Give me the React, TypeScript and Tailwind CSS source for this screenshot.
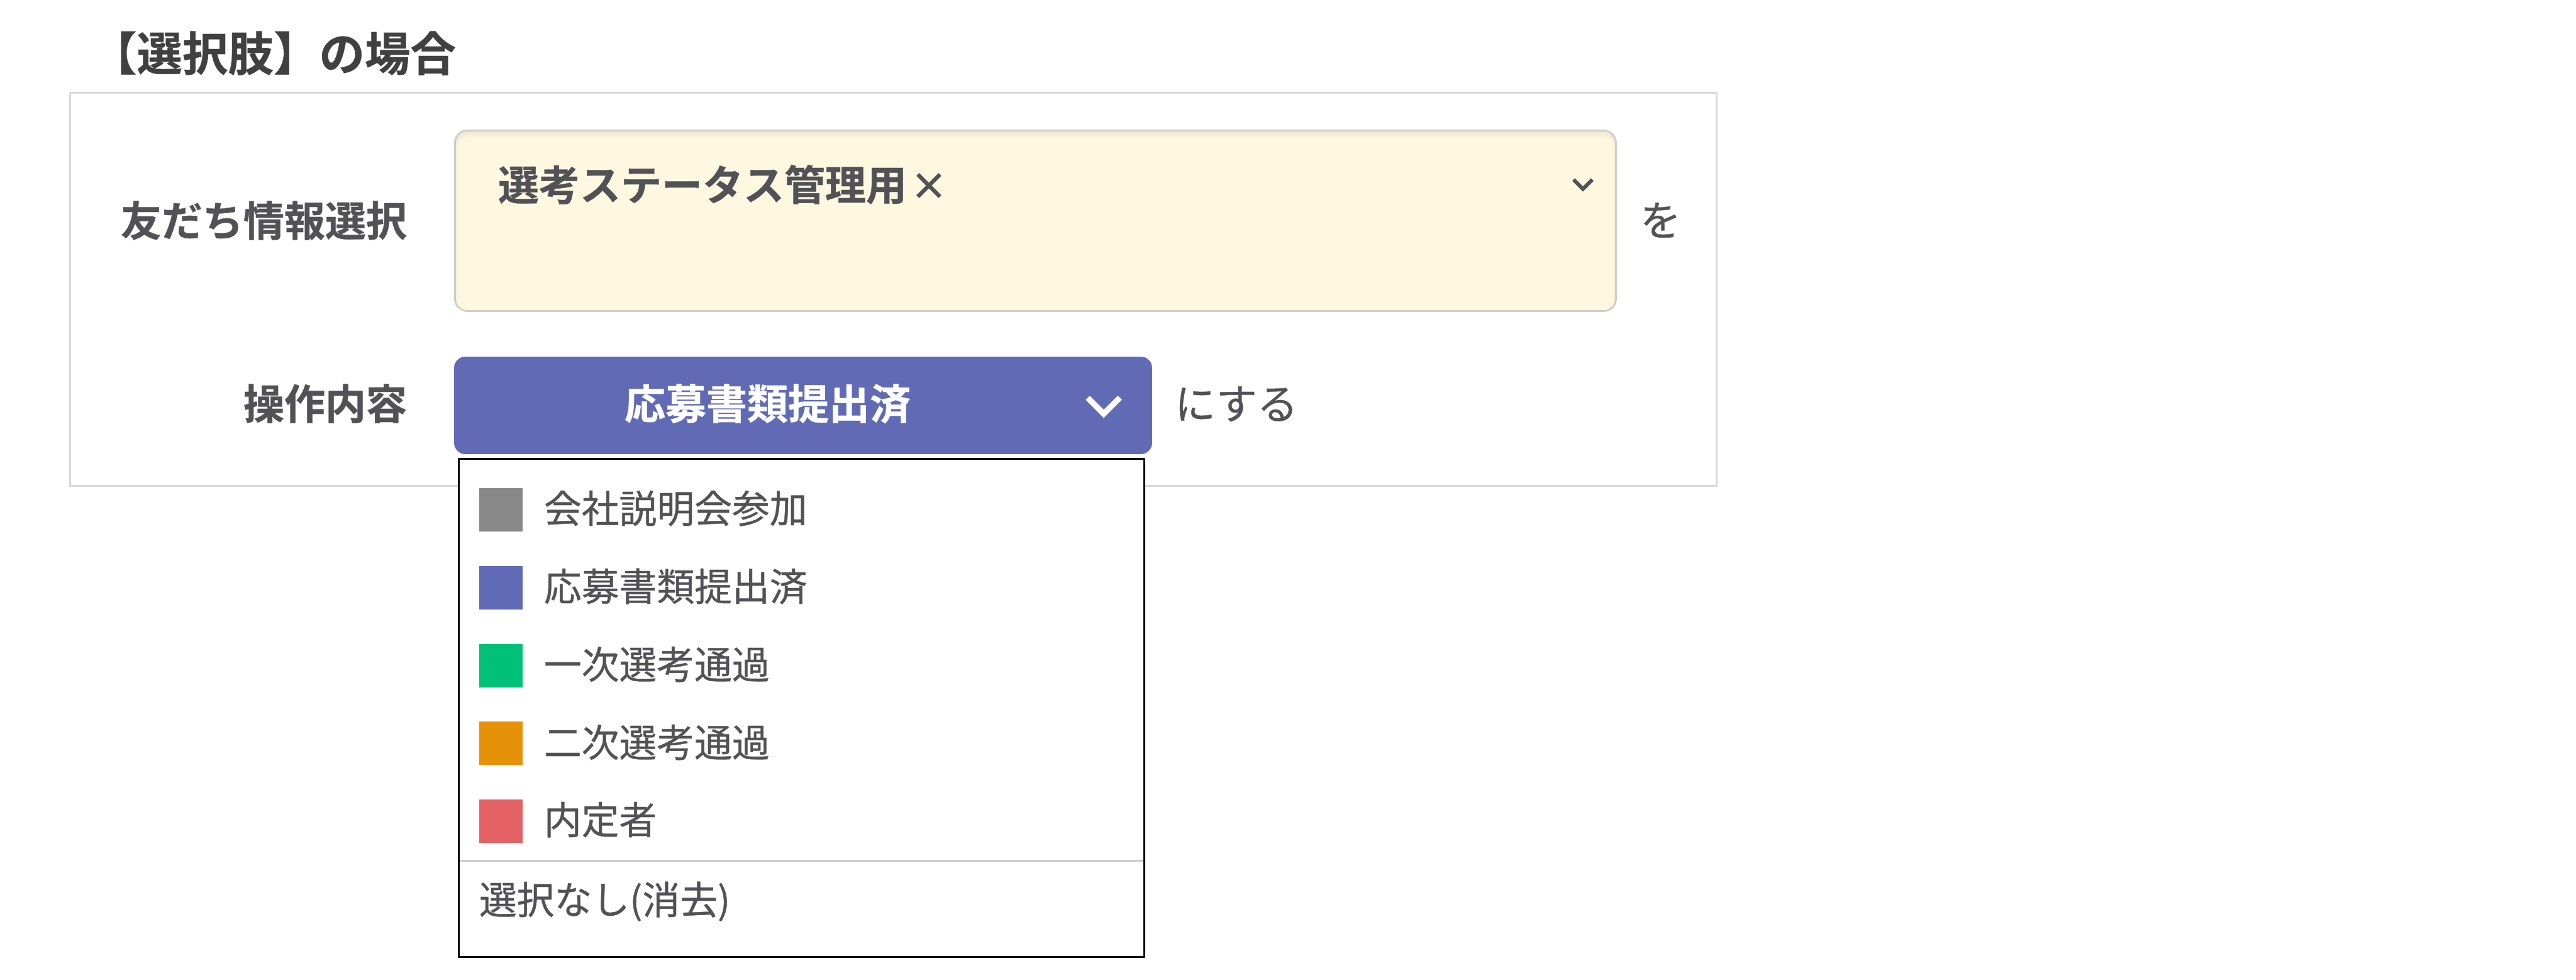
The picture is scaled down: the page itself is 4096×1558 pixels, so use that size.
const options = [
  { label: "会社説明会参加", swatch: "bg-[#888888]" },
  { label: "応募書類提出済", swatch: "bg-[#616ab5]" },
  { label: "一次選考通過", swatch: "bg-[#00c177]" },
  { label: "二次選考通過", swatch: "bg-[#e69208]" },
  { label: "内定者", swatch: "bg-[#e36164]" },
];

function FriendInfoField() {
  return (
    <div className="flex h-[290px] w-[1849px] items-start justify-between rounded-[21px] border-[3px] border-[#cccccc] bg-[#fff8e1] pt-[45px] pr-[34px] pl-[67px] shadow-[inset_0_6px_6px_rgba(0,0,0,0.07)]">
      <div className="flex h-[84px] items-center">
        <span className="pb-[12px] font-bold">選考ステータス管理用</span>
        <svg className="mb-[2px] ml-[15px] h-[40px] w-[40px]" viewBox="0 0 40 40" fill="none" stroke="currentColor" strokeWidth="6.4">
          <path d="M2.3 2.3L37.7 37.7M37.7 2.3L2.3 37.7" />
        </svg>
      </div>
      <svg className="mt-[29px] h-[22px] w-[34px]" viewBox="0 0 34 22" fill="none" stroke="currentColor" strokeWidth="6">
        <path d="M2 2.4L17 17.4L32 2.4" />
      </svg>
    </div>
  );
}

function StatusSelect() {
  return (
    <div className="relative">
      <button className="flex h-[155px] w-[1110px] items-center justify-between rounded-[18px] bg-[#616ab5] pr-[48px] pl-[271px] text-white">
        <span className="pb-[13px] font-bold">応募書類提出済</span>
        <svg className="mt-[4px] h-[38px] w-[58px]" viewBox="0 0 58 38" fill="none" stroke="currentColor" strokeWidth="9.4">
          <path d="M3.4 4.2L29 29.8L54.6 4.2" />
        </svg>
      </button>
      <div className="absolute top-[161px] left-[6px] flex h-[795px] w-[1093px] flex-col border-[3px] border-black bg-white pt-[18px] text-[59.8px]">
        {options.map((o) => (
          <div key={o.label} className="flex h-[123.7px] items-center pl-[31px]">
            <span className={`h-[69px] w-[69px] shrink-0 ${o.swatch}`} />
            <span className="ml-[34px] pb-[9px]">{o.label}</span>
          </div>
        ))}
        <div className="flex h-[130px] items-center border-t-[3px] border-[#cccccc] pb-[12px] pl-[31px]">
          選択なし(消去)
        </div>
      </div>
    </div>
  );
}

export default function App() {
  return (
    <main className="h-[1558px] w-[4096px] overflow-hidden bg-white pt-[34px] pl-[110px] font-['Noto_Sans_CJK_JP',sans-serif] leading-none whitespace-nowrap text-[#515156] [-webkit-text-stroke:0.5px_currentColor]">
      <h1 className="flex h-[111.5px] items-start pt-[11px] pl-[35px] text-[72.5px] font-bold text-[#404040]">
        【選択肢】の場合
      </h1>
      <section className="flex h-[628px] w-[2621px] flex-col gap-[71px] border-[3px] border-[#d9d9d9] pt-[57.5px] text-[65px]">
        <div className="flex items-center">
          <div className="w-[534px] pb-[8px] text-right font-bold">友だち情報選択</div>
          <div className="ml-[75px]">
            <FriendInfoField />
          </div>
          <span className="ml-[37px] pb-[10px]">を</span>
        </div>
        <div className="flex items-center">
          <div className="w-[534px] pb-[13px] text-right font-bold">操作内容</div>
          <div className="ml-[75px]">
            <StatusSelect />
          </div>
          <span className="ml-[36px] pb-[13px]">にする</span>
        </div>
      </section>
    </main>
  );
}
